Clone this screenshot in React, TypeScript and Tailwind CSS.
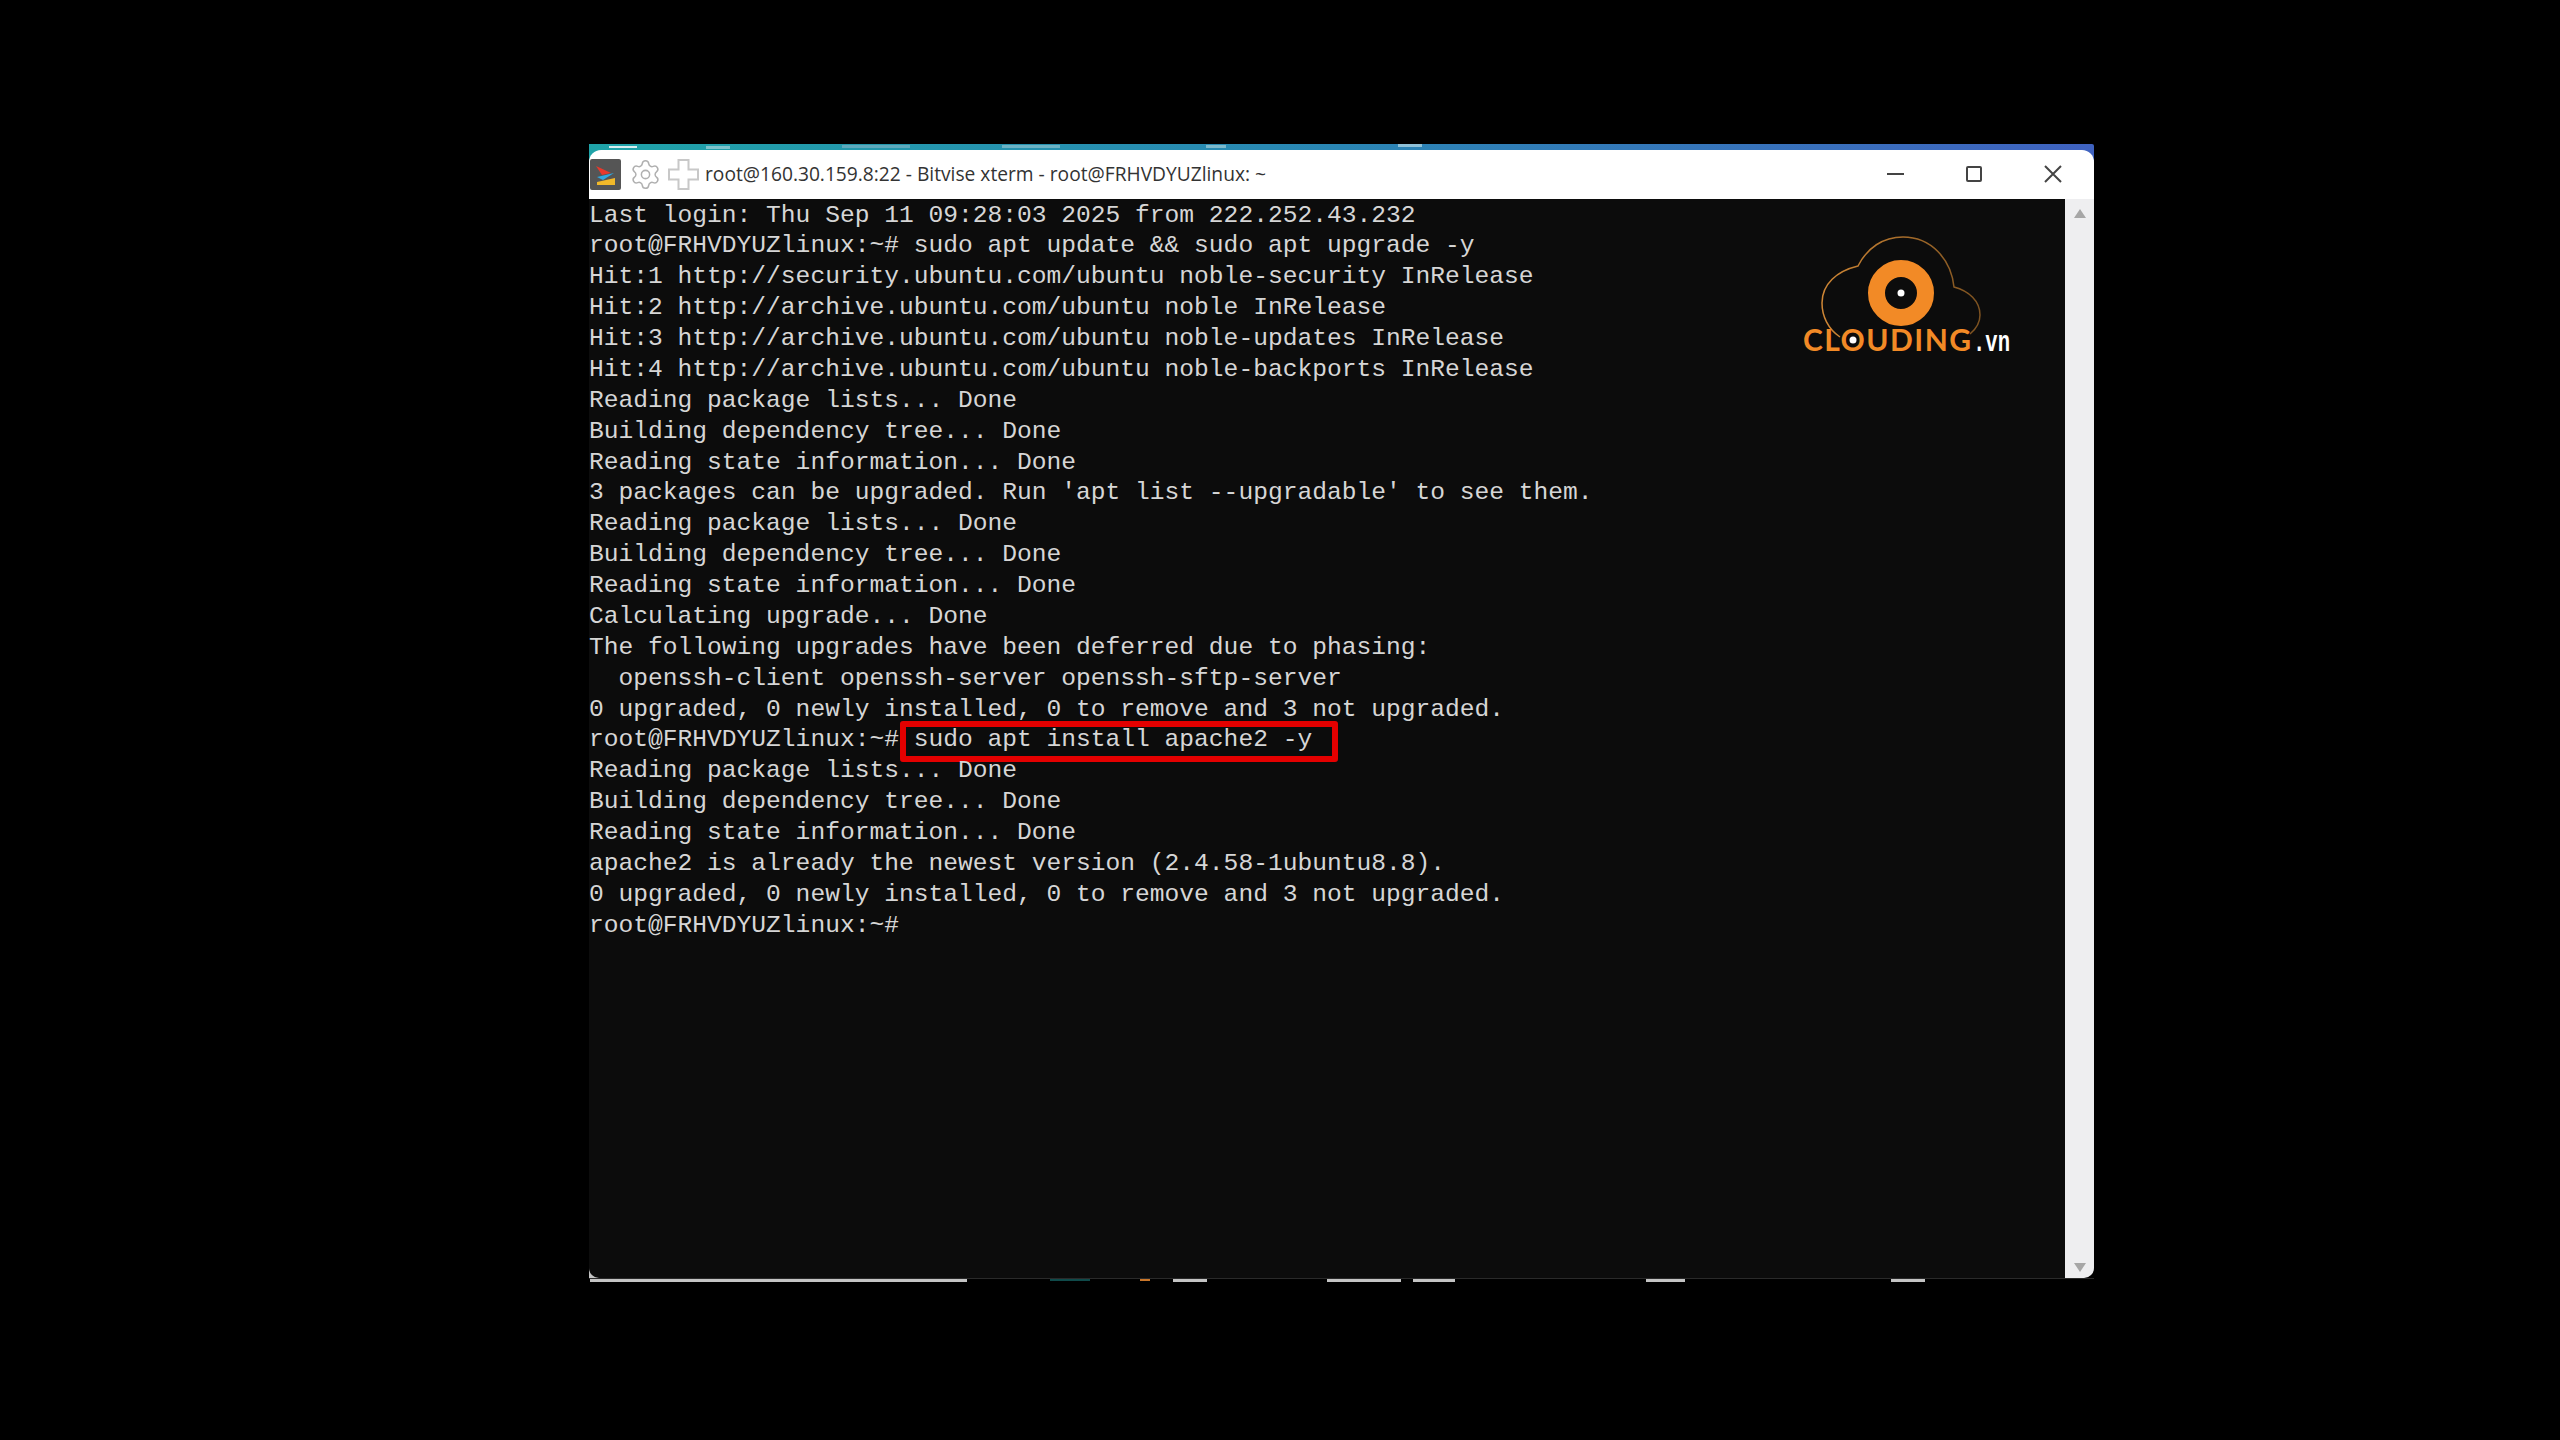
import { Settings } from "lucide-react";

const lines = [
  "Last login: Thu Sep 11 09:28:03 2025 from 222.252.43.232",
  "root@FRHVDYUZlinux:~# sudo apt update && sudo apt upgrade -y",
  "Hit:1 http://security.ubuntu.com/ubuntu noble-security InRelease",
  "Hit:2 http://archive.ubuntu.com/ubuntu noble InRelease",
  "Hit:3 http://archive.ubuntu.com/ubuntu noble-updates InRelease",
  "Hit:4 http://archive.ubuntu.com/ubuntu noble-backports InRelease",
  "Reading package lists... Done",
  "Building dependency tree... Done",
  "Reading state information... Done",
  "3 packages can be upgraded. Run 'apt list --upgradable' to see them.",
  "Reading package lists... Done",
  "Building dependency tree... Done",
  "Reading state information... Done",
  "Calculating upgrade... Done",
  "The following upgrades have been deferred due to phasing:",
  "  openssh-client openssh-server openssh-sftp-server",
  "0 upgraded, 0 newly installed, 0 to remove and 3 not upgraded.",
  "root@FRHVDYUZlinux:~# sudo apt install apache2 -y",
  "Reading package lists... Done",
  "Building dependency tree... Done",
  "Reading state information... Done",
  "apache2 is already the newest version (2.4.58-1ubuntu8.8).",
  "0 upgraded, 0 newly installed, 0 to remove and 3 not upgraded.",
  "root@FRHVDYUZlinux:~#",
];

const Logo = () => (
  <svg className="absolute top-0 left-[1212px]" width="240" height="165" viewBox="0 0 240 165">
    <defs>
      <linearGradient id="cloudLine" x1="0" y1="0" x2="1" y2="0">
        <stop offset="0" stopColor="#d08735" />
        <stop offset="1" stopColor="#7d5220" />
      </linearGradient>
    </defs>
    <path
      d="M39 138 C27 130 21 117 21 104 C21 85 36 72 57 67 C66 49 82 38 102 38 C130 38 150 60 153 88 C168 92 179 102 179 116 C179 123 175 130 169 135"
      fill="none"
      stroke="url(#cloudLine)"
      strokeWidth="1.5"
    />
    <circle cx="100" cy="94" r="24.5" fill="none" stroke="#f28a26" strokeWidth="17" />
    <circle cx="100" cy="94" r="3.5" fill="#ffffff" />
    <text
      x="2"
      y="152"
      fontFamily="Lato, sans-serif"
      fontWeight="700"
      fontSize="30"
      fill="#f28a26"
      textLength="168"
      lengthAdjust="spacing"
    >
      CLOUDING
    </text>
    <circle cx="52" cy="141" r="3.5" fill="#ffffff" />
    <text
      x="172"
      y="152"
      fontFamily="Liberation Mono, monospace"
      fontWeight="700"
      fontSize="30"
      fill="#ffffff"
      textLength="37"
      lengthAdjust="spacingAndGlyphs"
    >
      .vn
    </text>
  </svg>
);

const PlusIcon = () => (
  <svg width="31" height="31" viewBox="0 0 31 31" fill="none" stroke="#c8c8c8" strokeWidth="2">
    <path d="M10.500 1h10v9.500h9.500v10h-9.500v9.500h-10v-9.500h-9.500v-10h9.500z" />
  </svg>
);

const AppIcon = () => (
  <svg width="31" height="31" viewBox="0 0 31 31">
    <rect width="31" height="31" rx="2" fill="#555555" />
    <path d="M6 7l15 7-9 2z" fill="#e8392c" />
    <path d="M7 18l17-4-11 7z" fill="#2fa8e0" />
    <path d="M7 26v-3l18-4v7z" fill="#f2b92a" />
  </svg>
);

export default function App() {
  return (
    <div className="w-[2560px] h-[1440px] bg-black pt-[144px] pl-[589px] overflow-hidden">
      <div className="w-[1505px]">
        <div className="bg-gradient-to-r from-[#1fa3a8] via-[#2a86b4] to-[#3f62c0] rounded-tr-[2px]">
          <div className="h-[6px] flex items-start">
            <div className="ml-[20px] mt-[2px] w-[28px] h-[2px] bg-[#d8eef0]" />
            <div className="ml-[69px] mt-[2px] w-[24px] h-[3px] bg-[#7fc3cc]" />
            <div className="ml-[112px] mt-[1px] w-[68px] h-[3px] bg-[#5ea9bc]" />
            <div className="ml-[92px] mt-[1px] w-[58px] h-[3px] bg-[#6cb2c4]" />
            <div className="ml-[146px] mt-[1px] w-[20px] h-[3px] bg-[#7db9cc]" />
            <div className="ml-[172px] w-[24px] h-[3px] bg-[#8fc1d8]" />
          </div>
          <div className="h-[49px] bg-white rounded-t-[12px] flex items-center pl-[1px] pr-[32px]">
            <AppIcon />
            <Settings className="ml-[8px] text-[#b0b0b0]" size={33} strokeWidth={1.1} />
            <div className="ml-[6px]">
              <PlusIcon />
            </div>
            <span className="ml-[6px] text-[#333333] text-[19.2px] font-['Open_Sans',sans-serif]">
              root@160.30.159.8:22 - Bitvise xterm - root@FRHVDYUZlinux: ~
            </span>
            <div className="ml-auto mb-[2px] flex items-center gap-[62px]">
              <div className="w-[17px] h-[2px] bg-[#444444]" />
              <div className="w-[16px] h-[16px] border-2 border-[#444444] rounded-[2px]" />
              <svg width="18" height="18" viewBox="0 0 18 18" stroke="#444444" strokeWidth="2">
                <path d="M1 1l16 16M17 1L1 17" />
              </svg>
            </div>
          </div>
        </div>
        <div className="flex h-[1079px]">
          <div className="flex-1 bg-[#c4c4c4]">
            <div className="relative h-full bg-[#0c0c0c] rounded-bl-[10px] overflow-hidden pt-[1.5px]">
              <pre className="font-['Liberation_Mono',monospace] text-[24.6px] leading-[30.88px] text-[#d6d6d6]">
                {lines.map((line, i) => (
                  <div key={i} className="relative h-[30.88px]">
                    {line}
                    {i === 17 && (
                      <div className="absolute top-[-4px] left-[311px] w-[438px] h-[41px] border-[6px] border-[#e40000] rounded-[3px]" />
                    )}
                  </div>
                ))}
              </pre>
              <Logo />
            </div>
          </div>
          <div className="w-[29px] bg-[#eeeef0] rounded-br-[10px] flex flex-col items-center justify-between pt-[10px] pb-[6px]">
            <div className="w-0 h-0 border-x-[6px] border-x-transparent border-b-[9px] border-b-[#a6a6a6]" />
            <div className="w-0 h-0 border-x-[6px] border-x-transparent border-t-[9px] border-t-[#a6a6a6]" />
          </div>
        </div>
        <div className="h-[4px] flex items-start border-t border-[#2a2a2a]">
          <div className="ml-px w-[377px] h-[3px] bg-[#c4c4c4]" />
          <div className="ml-[83px] w-[40px] h-[2px] bg-[#0f4a4a]" />
          <div className="ml-[50px] w-[10px] h-[2px] bg-[#c9762a]" />
          <div className="ml-[23px] w-[34px] h-[3px] bg-[#c4c4c4]" />
          <div className="ml-[120px] w-[74px] h-[3px] bg-[#c4c4c4]" />
          <div className="ml-[12px] w-[42px] h-[3px] bg-[#c4c4c4]" />
          <div className="ml-[191px] w-[39px] h-[3px] bg-[#c4c4c4]" />
          <div className="ml-[206px] w-[34px] h-[3px] bg-[#c4c4c4]" />
        </div>
      </div>
    </div>
  );
}
